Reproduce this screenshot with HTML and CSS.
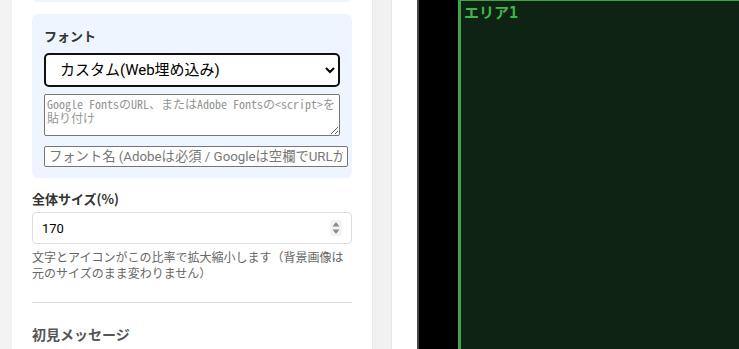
FILE: index.html
```html
<!DOCTYPE html>
<html lang="ja">
<head>
  <meta charset="utf-8">
  <title>オーバーレイ設定</title>
  <link rel="stylesheet" href="styles.css">
</head>
<body>
  <div class="sidebar">
    <div class="panel">
      <div class="group group-prev"></div>
      <div class="group">
        <label class="group-label">フォント</label>
        <select class="font-select">
          <option>カスタム(Web埋め込み)</option>
        </select>
        <textarea class="font-embed" placeholder="Google FontsのURL、またはAdobe Fontsの<script>を貼り付け"></textarea>
        <input class="font-name" type="text" placeholder="フォント名 (Adobeは必須 / Googleは空欄でURLから自動)">
      </div>
      <div class="field">
        <label class="field-label">全体サイズ(%)</label>
        <div class="num-wrap">
          <input class="num-input" type="number" value="170">
          <span class="spin">
            <svg width="8" height="14" viewBox="0 0 8 14"><path d="M4 1 L7.5 5.5 H0.5 Z M4 13 L7.5 8.5 H0.5 Z" fill="#8a8a8a"/></svg>
          </span>
        </div>
        <p class="hint">文字とアイコンがこの比率で拡大縮小します（背景画像は元のサイズのまま変わりません）</p>
      </div>
      <hr class="divider">
      <h3 class="section-title">初見メッセージ</h3>
    </div>
    <div class="scroll-track"></div>
  </div>
  <div class="preview">
    <div class="stage">
      <div class="area">エリア1</div>
    </div>
  </div>
</body>
</html>
```

FILE: styles.css
```css
* {
  margin: 0;
  padding: 0;
  box-sizing: border-box;
}
body {
  display: flex;
  height: 100vh;
  overflow: hidden;
  background-color: #ffffff;
  font-family: 'Noto Sans CJK JP', 'Liberation Sans', sans-serif;
  color: #333;
}
.sidebar {
  display: flex;
  width: 392px;
  padding-left: 12px;
  background-color: #f3f3f3;
}
.panel {
  width: 360px;
  background-color: #ffffff;
  padding: 0 20px;
  overflow: hidden;
}
.scroll-track {
  width: 20px;
  background-color: #f1f1f1;
  border-left: 1px solid #e8e8e8;
  border-right: 1px solid #e6e6e6;
}
.group {
  background-color: #eef5fe;
  border-radius: 6px;
  padding: 12px 12px 11px;
  margin-bottom: 12px;
}
.group-prev {
  height: 14px;
  padding: 0;
  margin-top: -12px;
}
.group-label {
  display: block;
  font-size: 13px;
  font-weight: bold;
  line-height: 18px;
  margin-top: 1px;
  margin-bottom: 8px;
  color: #333;
}
.font-select {
  display: block;
  width: 296px;
  height: 34px;
  padding: 0 10px;
  font-family: 'Roboto', 'Noto Sans CJK JP', sans-serif;
  font-size: 15px;
  color: #000;
  background-color: #fff;
  border: 2px solid #111;
  border-radius: 5px;
  margin-bottom: 7px;
}
.font-embed {
  display: block;
  width: 296px;
  height: 42px;
  padding: 2px 2px;
  font-family: 'Noto Sans Mono CJK JP', monospace;
  font-size: 12px;
  line-height: 14px;
  border: 1px solid #767676;
  border-radius: 2px;
  background-color: #fff;
  margin-bottom: 10px;
}
.font-embed::placeholder {
  color: #959595;
}
.font-name {
  display: block;
  width: 304px;
  height: 21px;
  padding: 0 4px;
  font-family: 'Roboto', 'Noto Sans CJK JP', sans-serif;
  font-size: 13.3px;
  border: 1px solid #767676;
  border-radius: 2px;
  background-color: #fff;
}
.font-name::placeholder {
  color: #777;
}
.field-label {
  display: block;
  font-size: 13px;
  font-weight: bold;
  line-height: 18px;
  margin-bottom: 4px;
  color: #333;
}
.num-wrap {
  position: relative;
}
.num-input {
  display: block;
  width: 320px;
  height: 32px;
  padding: 0 9px;
  font-family: 'Roboto', 'Liberation Sans', sans-serif;
  font-size: 13px;
  color: #000;
  border: 1px solid #ddd;
  border-radius: 4px;
  background-color: #fff;
}
.num-input::-webkit-inner-spin-button {
  -webkit-appearance: none;
}
.spin {
  position: absolute;
  right: 10px;
  top: 8px;
  width: 12px;
  height: 16px;
  display: flex;
  align-items: center;
  justify-content: center;
  background-color: #f4f4f4;
}
.hint {
  margin-top: 5px;
  font-size: 12px;
  line-height: 16px;
  color: #666;
}
.divider {
  border: none;
  border-top: 1px solid #ddd;
  margin: 21px 0 21px;
}
.section-title {
  font-size: 14px;
  font-weight: bold;
  line-height: 20px;
  color: #555;
}
.preview {
  flex: 1;
  display: flex;
  padding-left: 25px;
}
.stage {
  flex: 1;
  background-color: #000;
  border-left: 2px solid #444;
  padding-left: 39px;
  overflow: hidden;
}
.area {
  height: 360px;
  margin-top: -2px;
  margin-right: -10px;
  background-color: #0f2314;
  border: 3px solid #3fa548;
  padding: 3px 3px;
  font-family: 'DejaVu Sans Mono', 'Noto Sans CJK JP', monospace;
  font-size: 15px;
  font-weight: bold;
  line-height: 18px;
  color: #3fb64c;
}
```
